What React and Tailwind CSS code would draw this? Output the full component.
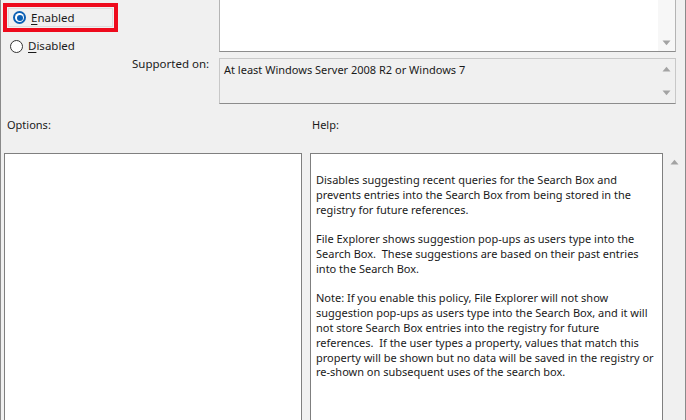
import React from 'react';

const font = { fontFamily: '"Segoe UI", "Noto Sans", "Open Sans", sans-serif' };

const ArrowUp = () => (
  <svg width="9" height="6" viewBox="0 0 9 6" className="block">
    <path d="M0.5 5.5 L4.5 0.8 L8.5 5.5 Z" fill="#a3a3a3" />
  </svg>
);

const ArrowDown = () => (
  <svg width="9" height="6" viewBox="0 0 9 6" className="block">
    <path d="M0.5 0.5 L4.5 5.2 L8.5 0.5 Z" fill="#a3a3a3" />
  </svg>
);

const Radio = ({ checked }) =>
  checked ? (
    <span className="w-[13px] h-[13px] rounded-full bg-[#0a5fb4] flex items-center justify-center shrink-0">
      <span className="w-[9px] h-[9px] rounded-full bg-white flex items-center justify-center">
        <span className="w-[6px] h-[6px] rounded-full bg-[#0a5fb4]" />
      </span>
    </span>
  ) : (
    <span className="w-[13px] h-[13px] rounded-full border border-[#333] bg-white shrink-0" />
  );

const helpParagraphs = [
  'Disables suggesting recent queries for the Search Box and prevents entries into the Search Box from being stored in the registry for future references.',
  'File Explorer shows suggestion pop-ups as users type into the Search Box.  These suggestions are based on their past entries into the Search Box.',
  'Note: If you enable this policy, File Explorer will not show suggestion pop-ups as users type into the Search Box, and it will not store Search Box entries into the registry for future references.  If the user types a property, values that match this property will be shown but no data will be saved in the registry or re-shown on subsequent uses of the search box.',
];

export default function App() {
  return (
    <div
      className="w-[686px] h-[420px] bg-[#f0f0f0] overflow-hidden border-l border-r border-[#8a8a8a] text-[11px] text-[#1a1a1a] flex flex-col"
      style={font}
    >
      {/* state + supported on */}
      <div className="flex">
        <div className="w-[218px] flex flex-col">
          <div className="ml-[2px] mt-[3px] w-[115px] h-[29px] border-[4px] border-[#ee0a1c] p-px">
            <div className="h-full border border-[#dcdcdc] flex items-center gap-[5px] pl-[4px]">
              <Radio checked />
              <span className="text-[11.5px]">
                <span className="underline underline-offset-2">E</span>nabled
              </span>
            </div>
          </div>
          <div className="mt-[6px] ml-[9px] flex items-center gap-[5px] h-[16px]">
            <Radio />
            <span className="text-[11.5px]">
              <span className="underline underline-offset-2">D</span>isabled
            </span>
          </div>
          <div className="pl-[131px] mt-[2px] leading-[16px] text-[11.5px]">Supported on:</div>
        </div>
        <div className="w-[457px] flex flex-col">
          <div className="h-[52px] bg-white border-l border-b border-r border-[#b4b4b4] border-b-[#8c8c8c] flex justify-end">
            <div className="w-[17px] bg-[#f7f7f7] flex flex-col justify-end items-center pb-[5px]">
              <ArrowDown />
            </div>
          </div>
          <div className="mt-[6px] h-[46px] border border-[#c8c8c8] border-b-[#8c8c8c] flex">
            <div className="flex-1 pl-[4px] pt-[3px] leading-[16px]">
              At least Windows Server 2008 R2 or Windows 7
            </div>
            <div className="w-[17px] flex flex-col justify-between items-center py-[7px]">
              <ArrowUp />
              <ArrowDown />
            </div>
          </div>
        </div>
      </div>

      {/* labels */}
      <div className="flex mt-[13px] leading-[16px]">
        <div className="w-[311px] pl-[6px]">Options:</div>
        <div>Help:</div>
      </div>

      {/* options + help */}
      <div className="flex mt-[20px] flex-1 min-h-0">
        <div className="ml-[3px] w-[298px] bg-white border-l border-t border-r border-[#7f7f7f]" />
        <div className="ml-[8px] w-[353px] bg-white border-l border-t border-r border-[#7f7f7f] pl-[5px] pr-[4px] pt-[19px] leading-[14.8px] whitespace-pre-wrap">
          {helpParagraphs.map((p, i) => (
            <p key={i} className={i > 0 ? 'mt-[14.8px]' : ''}>
              {p}
            </p>
          ))}
        </div>
        <div className="w-[22px] flex flex-col items-center pt-[6px]">
          <ArrowUp />
        </div>
      </div>
    </div>
  );
}
